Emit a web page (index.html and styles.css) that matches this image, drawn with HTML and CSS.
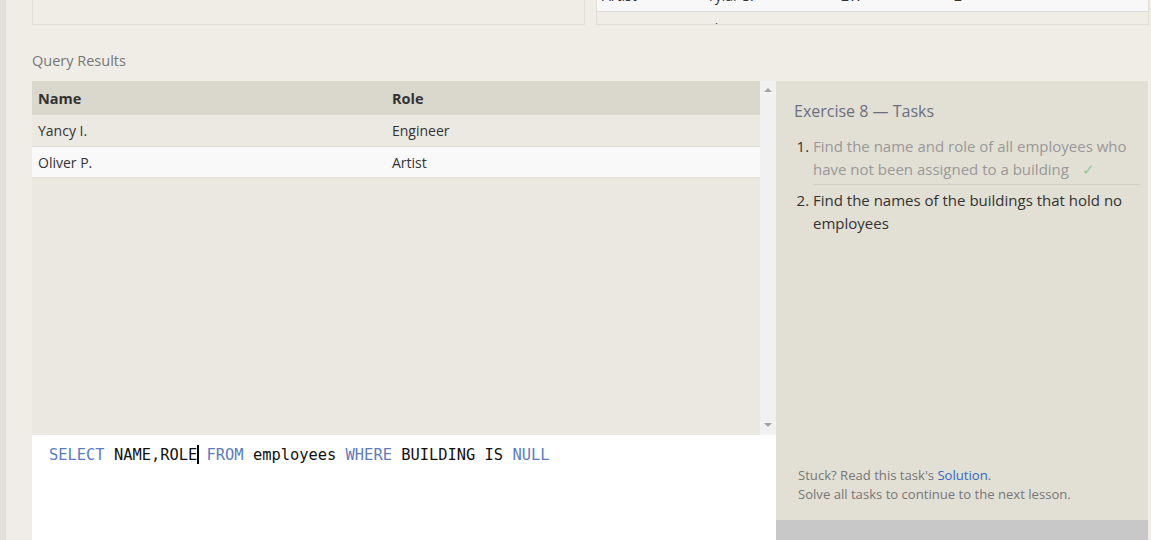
FILE: index.html
```html
<!DOCTYPE html>
<html>
<head>
<meta charset="utf-8">
<link rel="stylesheet" href="styles.css">
</head>
<body>
<div class="page">
  <div class="strip"></div>
  <div class="main">
    <div class="top-row">
      <div class="top-box"></div>
      <div class="top-box table-box">
        <div class="trow light scrolled">
          <span class="c1">Artist</span><span class="c2">Tylar S.</span><span class="c3">2W</span><span class="c4">2</span>
        </div>
        <div class="trow">
          <span class="c1">Artist</span><span class="c2">Sherman D.</span><span class="c3">2W</span><span class="c4">8</span>
        </div>
      </div>
    </div>
    <h2 class="section-title">Query Results</h2>
    <div class="workspace">
      <div class="left-col">
        <div class="results">
          <div class="results-table">
            <div class="rrow head"><div class="cell name">Name</div><div class="cell">Role</div></div>
            <div class="rrow odd"><div class="cell name">Yancy I.</div><div class="cell">Engineer</div></div>
            <div class="rrow even"><div class="cell name">Oliver P.</div><div class="cell">Artist</div></div>
          </div>
          <div class="scrollbar">
            <span class="arrow up"></span>
            <span class="arrow down"></span>
          </div>
        </div>
        <div class="editor">
          <div class="code"><span class="kw">SELECT</span> NAME,ROLE<span class="cursor"></span> <span class="kw">FROM</span> employees <span class="kw">WHERE</span> BUILDING IS <span class="kw">NULL</span></div>
        </div>
      </div>
      <div class="right-col">
        <div class="tasks">
          <h3 class="tasks-title">Exercise 8 — Tasks</h3>
          <ol class="task-list">
            <li class="done">Find the name and role of all employees who have not been assigned to a building <span class="check">✓</span></li>
            <li>Find the names of the buildings that hold no employees</li>
          </ol>
          <div class="help">
            <p>Stuck? Read this task's <a class="link">Solution</a>.</p>
            <p>Solve all tasks to continue to the next lesson.</p>
          </div>
        </div>
        <div class="continue"></div>
      </div>
    </div>
  </div>
</div>
</body>
</html>
```

FILE: styles.css
```css
* { box-sizing: border-box; }
html, body { margin: 0; padding: 0; }
body {
  background: #f0ede6;
  font-family: "Open Sans", "Noto Sans", sans-serif;
  color: #333;
  width: 1151px;
  height: 540px;
  overflow: hidden;
}
.page { display: flex; height: 540px; }
.strip { width: 6px; background: #e3e0db; flex: none; }
.main { padding-left: 26px; width: 1145px; }

.top-row { display: flex; gap: 11px; height: 25px; }
.top-box {
  width: 553px;
  height: 25px;
  border: 1px solid #e2dfd8;
  border-top: none;
  overflow: hidden;
}
.trow {
  height: 33px;
  display: flex;
  align-items: center;
  font-size: 14px;
  color: #333;
  border-bottom: 1px solid #dcdcdc;
}
.trow.light { background: #f8f8f8; }
.trow.scrolled { margin-top: -21px; }
.trow span { display: block; }
.c1 { width: 110px; padding-left: 5px; }
.c2 { width: 134px; }
.c3 { width: 113px; }
.c4 { width: 100px; }

.section-title {
  margin: 0;
  height: 56px;
  padding-top: 26px;
  font-size: 14.5px;
  font-weight: 400;
  color: #777;
  line-height: 20px;
}

.workspace { display: flex; }
.left-col { width: 744px; display: flex; flex-direction: column; }
.results { display: flex; height: 354px; background: #eae8e0; }
.results-table { width: 728px; }
.rrow { display: flex; height: 32px; align-items: center; font-size: 14px; border-bottom: 1px solid #dedcd6; }
.rrow.head { height: 34px; background: #dad8cc; font-weight: 700; font-size: 14.5px; border-bottom: none; }
.rrow.odd { background: #ebe9e2; }
.rrow.even { background: #f9f9f9; height: 31px; border-bottom: 1px solid #e6e4dd; }
.cell { padding-left: 6px; }
.cell.name { width: 354px; }
.scrollbar {
  width: 16px;
  background: #f1f1f1;
  position: relative;
}
.arrow {
  position: absolute;
  left: 4px;
  width: 0; height: 0;
  border-left: 4px solid transparent;
  border-right: 4px solid transparent;
}
.arrow.up { top: 7px; border-bottom: 4px solid #a3a3a3; }
.arrow.down { bottom: 8px; border-top: 4px solid #a3a3a3; }

.editor { background: #fff; height: 120px; padding: 10px 0 0 17px; }
.code {
  font-family: "DejaVu Sans Mono", monospace;
  font-size: 15.4px;
  line-height: 20px;
  color: #111;
  white-space: pre;
}
.kw { color: #5b7cbf; }
.cursor {
  display: inline-block;
  width: 2px;
  height: 19px;
  background: #000;
  vertical-align: -4px;
  margin-right: -2px;
}

.right-col { width: 372px; display: flex; flex-direction: column; }
.tasks {
  background: #e2dfd4;
  height: 439px;
  padding: 19px 8px 0 18px;
  display: flex;
  flex-direction: column;
}
.continue { background: #c8c8c8; height: 40px; }
.tasks-title {
  margin: 0 0 13px 0;
  font-size: 16px;
  font-weight: 400;
  color: #6b7080;
  line-height: 22px;
}
.task-list {
  margin: 0;
  padding-left: 19px;
  font-size: 15px;
  line-height: 23px;
}
.task-list li { padding-bottom: 3px; }
.task-list li.done {
  color: #999;
  border-bottom: 1px solid #d3d0c6;
  padding-bottom: 3px;
  margin-bottom: 4px;
}
.task-list li.done::marker { color: #333; }
.check { color: #8ccc9c; margin-left: 9px; }
.help {
  margin-top: auto;
  padding: 0 0 16px 4px;
  font-size: 13.1px;
  line-height: 19px;
  color: #777;
}
.help p { margin: 0; }
.link { color: #3366cc; }
```
